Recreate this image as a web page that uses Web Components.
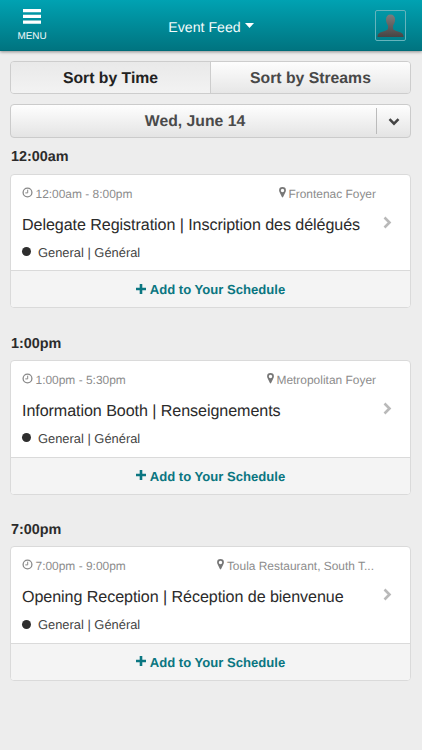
<!DOCTYPE html>
<html lang="en">
<head>
<meta charset="utf-8">
<title>Event Feed</title>
<style>
	body {
		margin: 0;
		background: #ededed;
		color: #2b2b2b;
		font-family: "Liberation Sans", Arial, sans-serif;
		text-rendering: geometricPrecision;
	}
	main {
		display: flex;
		flex-direction: column;
		padding: 10px 11px 0 10px;
	}
	.cut {
		margin-right: 2px;
	}
</style>
</head>
<body>
<feed-header>Event Feed</feed-header>
<main>
	<sort-tabs>
		<span slot="active">Sort by Time</span>
		<span slot="other">Sort by Streams</span>
	</sort-tabs>
	<date-picker>Wed, June 14</date-picker>
	<event-group time="12:00am">
		<event-card>
			<span slot="hours">12:00am - 8:00pm</span>
			<span slot="place">Frontenac Foyer</span>
			<span slot="title">Delegate Registration | Inscription des délégués</span>
			<span slot="stream">General | Général</span>
		</event-card>
	</event-group>
	<event-group time="1:00pm">
		<event-card>
			<span slot="hours">1:00pm - 5:30pm</span>
			<span slot="place">Metropolitan Foyer</span>
			<span slot="title">Information Booth | Renseignements</span>
			<span slot="stream">General | Général</span>
		</event-card>
	</event-group>
	<event-group time="7:00pm">
		<event-card>
			<span slot="hours">7:00pm - 9:00pm</span>
			<span slot="place" class="cut">Toula Restaurant, South T...</span>
			<span slot="title">Opening Reception | Réception de bienvenue</span>
			<span slot="stream">General | Général</span>
		</event-card>
	</event-group>
</main>

<script>
// Shared base: puts the class template in an open shadow root
class BaseElement extends HTMLElement {
	constructor() {
		super();
		this.attachShadow({ mode: 'open' });
		this.shadowRoot.innerHTML = this.constructor.template;
	}
}

class FeedHeader extends BaseElement {
	static template = `
		<style>
			:host {
				display: grid;
				grid-template-columns: 64px 1fr 64px;
				box-sizing: border-box;
				height: 51px;
				background: linear-gradient(#00a2b2, #007480);
				border-bottom: 1px solid #006c78;
				box-shadow: 0 1px 3px rgba(0, 0, 0, .4);
				color: #f4fbfc;
			}
			.menu {
				display: flex;
				flex-direction: column;
				align-items: center;
				gap: 7px;
				padding-top: 9px;
				font-size: 9.9px;
				line-height: 12px;
			}
			.title {
				display: flex;
				align-items: center;
				justify-content: center;
				gap: 4px;
				padding-top: 3px;
				font-size: 14.15px;
			}
			.title svg {
				margin-top: -2px;
			}
			.avatar {
				box-sizing: border-box;
				width: 31px;
				height: 31px;
				margin: 10px 0 0 16.5px;
				padding: 1px;
				border: 1px solid #65b4bc;
				border-radius: 2px;
			}
			svg {
				display: block;
			}
		</style>
		<div class="menu">
			<svg width="18" height="15" viewBox="0 0 18 15" fill="#fff">
				<path d="M0 0h18v3.2H0zM0 5.8h18V9H0zM0 11.6h18v3.2H0z"/>
			</svg>
			<span>MENU</span>
		</div>
		<div class="title">
			<slot></slot>
			<svg width="9" height="5" viewBox="0 0 9 5"><path d="M0 0h9L4.5 5z" fill="#fff"/></svg>
		</div>
		<div class="avatar">
			<svg width="27" height="27" viewBox="0 0 27 27">
				<defs>
					<linearGradient id="shade" x1="0" y1="0" x2="0" y2="1">
						<stop offset="0" stop-color="#7c7c7c"/>
						<stop offset="1" stop-color="#484444"/>
					</linearGradient>
				</defs>
				<path fill="url(#shade)" d="M13.5 2.6c2.9 0 4.6 2 4.6 5 0 2.6-.8 4.3-2 5.8v3.3c.4 1.4 2.4 2 4.9 2.8 3.3 1 5.600 2 5.600 5.500H.5c0-3.500 2.300-4.500 5.600-5.500 2.500-.8 4.500-1.400 4.900-2.800v-3.300c-1.200-1.500-2-3.200-2-5.800 0-3 1.600-5 4.500-5z"/>
			</svg>
		</div>
	`;
}

class SortTabs extends BaseElement {
	static template = `
		<style>
			:host {
				display: grid;
				grid-template-columns: 199px 1fr;
				box-sizing: border-box;
				height: 33px;
				border: 1px solid #cdcdcd;
				border-radius: 4px;
				overflow: hidden;
				font-size: 15.75px;
				font-weight: bold;
				line-height: 33px;
				text-align: center;
			}
			.active {
				background: linear-gradient(#e9e9e9, #f3f3f3);
				color: #222;
			}
			.other {
				border-left: 1px solid #cdcdcd;
				background: linear-gradient(#fdfdfd, #e5e5e5);
				color: #484848;
			}
		</style>
		<div class="active"><slot name="active"></slot></div>
		<div class="other"><slot name="other"></slot></div>
	`;
}

class DatePicker extends BaseElement {
	static template = `
		<style>
			:host {
				display: flex;
				align-items: center;
				box-sizing: border-box;
				height: 34px;
				margin-top: 10px;
				border: 1px solid #cbcbcb;
				border-radius: 4px;
				background: linear-gradient(#fefefe, #e4e4e4);
				color: #4a4a4a;
				font-size: 15.75px;
				font-weight: bold;
			}
			.date {
				flex: 1;
				padding: 1px 0 0 3px;
				text-align: center;
			}
			.arrow {
				display: flex;
				align-items: center;
				justify-content: center;
				width: 33px;
				height: 26px;
				border-left: 1px solid #bbb;
			}
			.arrow svg {
				margin-top: 2px;
			}
		</style>
		<div class="date"><slot></slot></div>
		<div class="arrow">
			<svg width="12" height="8" viewBox="0 0 12 8">
				<path d="M1.5 1.2 6 5.7l4.5-4.5" fill="none" stroke="#444" stroke-width="2.5"/>
			</svg>
		</div>
	`;
}

class EventGroup extends BaseElement {
	static template = `
		<style>
			:host {
				display: block;
				height: 186.3px;
			}
			h2 {
				margin: 0;
				padding: 10.3px 0 7.4px 1px;
				font-size: 14.4px;
				line-height: 18px;
			}
		</style>
		<h2></h2>
		<slot></slot>
	`;

	connectedCallback() {
		this.shadowRoot.querySelector('h2').textContent = this.getAttribute('time');
	}
}

class EventCard extends BaseElement {
	static template = `
		<style>
			:host {
				display: block;
				box-sizing: border-box;
				height: 134.8px;
				border: 1px solid #dadada;
				border-radius: 4px;
				background: #fff;
				overflow: hidden;
			}
			.info {
				box-sizing: border-box;
				height: 95.6px;
				padding: 11px 18px 0 11px;
			}
			.meta {
				display: flex;
				justify-content: space-between;
				padding-right: 16px;
				color: #8c8c8c;
				font-size: 11.95px;
				line-height: 16px;
			}
			.meta div {
				display: flex;
				gap: 2.5px;
			}
			.meta svg {
				margin-top: 1px;
			}
			.title {
				display: flex;
				align-items: flex-start;
				justify-content: space-between;
				margin-top: 13px;
				font-size: 16.1px;
				letter-spacing: -.07px;
				line-height: 20px;
				white-space: nowrap;
			}
			.title svg {
				margin-top: 1px;
			}
			.stream {
				display: flex;
				align-items: center;
				gap: 7px;
				margin-top: 9px;
				color: #444;
				font-size: 12.9px;
				line-height: 18px;
			}
			.stream i {
				width: 9px;
				height: 9px;
				margin-top: -2px;
				border-radius: 50%;
				background: #2e2e2e;
			}
			.add {
				display: flex;
				align-items: center;
				justify-content: center;
				gap: 4px;
				box-sizing: border-box;
				height: 37.2px;
				padding-top: 1px;
				border-top: 1px solid #dadada;
				background: #f4f4f4;
				color: #0b7681;
				font-size: 13.1px;
				font-weight: bold;
			}
			.add svg {
				margin-top: -2px;
			}
		</style>
		<div class="info">
			<div class="meta">
				<div>
					<svg width="11" height="11" viewBox="0 0 11 11" fill="none" stroke="#888">
						<circle cx="5.5" cy="5.5" r="4.4" stroke-width="1.3"/>
						<path d="M5.7 2.7v3.2H3.3"/>
					</svg>
					<slot name="hours"></slot>
				</div>
				<div>
					<svg width="7" height="11" viewBox="0 0 7 11">
						<path fill="#777" fill-rule="evenodd" d="M3.5 0a3.4 3.4 0 0 1 3.4 3.5c0 .7-.2 1.1-.4 1.6L4.1 10q-.6.9-1.2 0L.5 5.1C.3 4.6.1 4.2.1 3.5A3.4 3.4 0 0 1 3.5 0zm0 1.8a1.7 1.7 0 1 0 0 3.4 1.7 1.7 0 0 0 0-3.4z"/>
					</svg>
					<slot name="place"></slot>
				</div>
			</div>
			<div class="title">
				<slot name="title"></slot>
				<svg width="9" height="13" viewBox="0 0 9 13">
					<path d="M1.5 1.5l5 5-5 5" fill="none" stroke="#b9b9b9" stroke-width="2.6"/>
				</svg>
			</div>
			<div class="stream"><i></i><slot name="stream"></slot></div>
		</div>
		<div class="add">
			<svg width="10" height="10" viewBox="0 0 10 10">
				<path d="M5 0v10M0 5h10" stroke="#0b7681" stroke-width="2.6"/>
			</svg>
			<span>Add to Your Schedule</span>
		</div>
	`;
}

customElements.define('feed-header', FeedHeader);
customElements.define('sort-tabs', SortTabs);
customElements.define('date-picker', DatePicker);
customElements.define('event-group', EventGroup);
customElements.define('event-card', EventCard);
</script>
</body>
</html>
